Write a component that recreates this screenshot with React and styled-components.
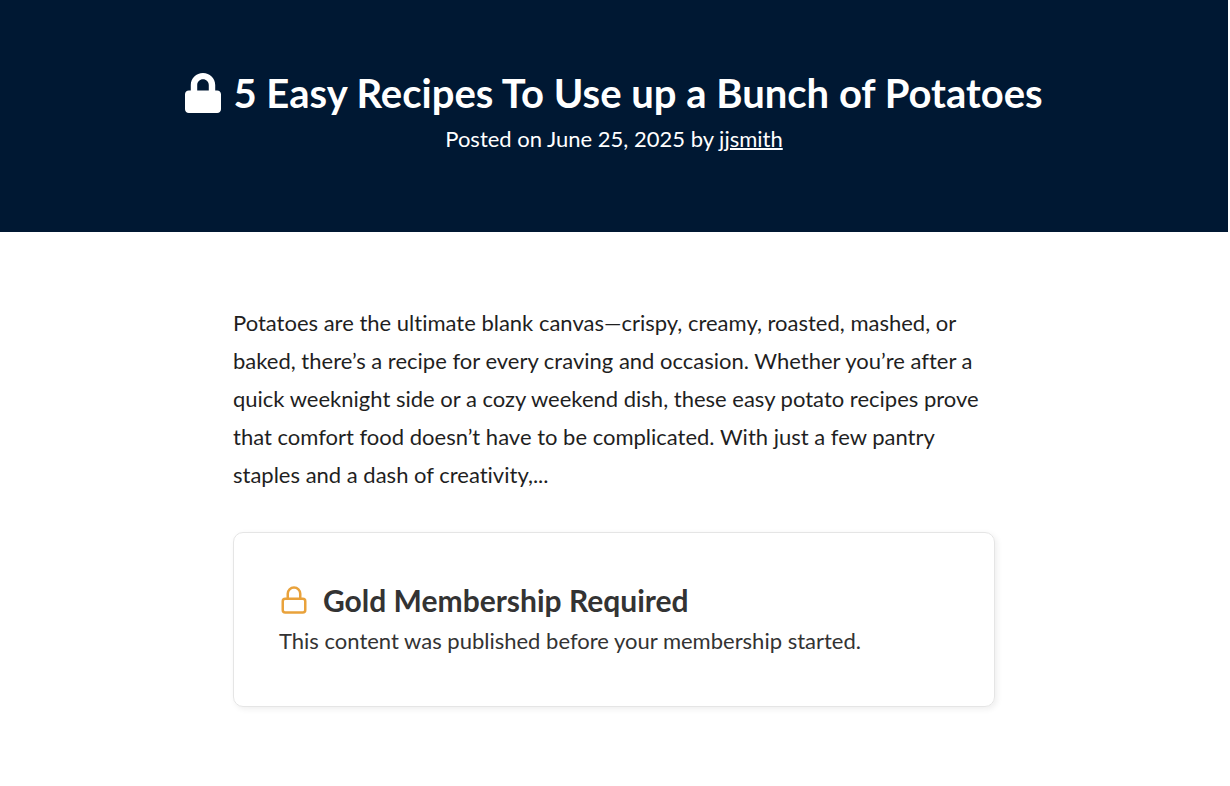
import React from "react";
import styled, { createGlobalStyle } from "styled-components";

const GlobalStyle = createGlobalStyle`
  *, *::before, *::after { box-sizing: border-box; }
  body {
    margin: 0;
    background: #fff;
    color: #1f1f1f;
    font-family: Lato, "Open Sans", sans-serif;
    font-size: 22px;
    font-variant-ligatures: none;
    line-height: 38px;
  }
`;

const Page = styled.div`
  padding-right: 2px;
`;

const Banner = styled.header`
  padding: 66px 24px 74px;
  background: #001833;
  color: #fff;
  text-align: center;
`;

const Title = styled.h1`
  display: flex;
  align-items: center;
  justify-content: center;
  gap: 12px;
  margin: 0;
  font-size: 40px;
  font-weight: 700;
  line-height: 54px;
`;

const SolidLock = styled.svg`
  flex: none;
  width: 36px;
  height: 40px;
  fill: currentColor;
`;

const Byline = styled.p`
  margin: 0;
`;

const AuthorLink = styled.a`
  color: inherit;
  text-decoration: underline 2px;
`;

const Content = styled.main`
  max-width: 762px;
  margin: 0 auto;
  padding: 72px 0;
`;

const Excerpt = styled.p`
  margin: 0 0 38px;
`;

const Notice = styled.section`
  padding: 45px 45px 46px;
  border: 1px solid #e5e5e5;
  border-radius: 10px;
  box-shadow: 2px 2px 6px rgba(0, 0, 0, 0.07);
  color: #333;
`;

const NoticeTitle = styled.h2`
  display: flex;
  align-items: center;
  gap: 14px;
  margin: 0;
  font-size: 30px;
  font-weight: 700;
  line-height: 44px;
`;

const OutlineLock = styled.svg`
  flex: none;
  width: 30px;
  height: 30px;
  fill: none;
  stroke: #e9a23b;
  stroke-width: 2;
  stroke-linecap: round;
  stroke-linejoin: round;
`;

const NoticeText = styled.p`
  margin: 0;
`;

export default function App() {
  return (
    <Page>
      <GlobalStyle />
      <Banner>
        <Title>
          <SolidLock viewBox="0 0 448 512" preserveAspectRatio="none" aria-hidden="true">
            <path d="M400 224h-24v-72C376 68.200 307.800 0 224 0S72 68.200 72 152v72H48c-26.500 0-48 21.500-48 48v192c0 26.500 21.500 48 48 48h352c26.500 0 48-21.500 48-48V272c0-26.500-21.500-48-48-48zm-104 0H152v-72c0-39.700 32.300-72 72-72s72 32.300 72 72v72z" />
          </SolidLock>
          5 Easy Recipes To Use up a Bunch of Potatoes
        </Title>
        <Byline>
          Posted on June 25, 2025 by <AuthorLink href="#jjsmith">jjsmith</AuthorLink>
        </Byline>
      </Banner>
      <Content>
        <Excerpt>
          Potatoes are the ultimate blank canvas—crispy, creamy, roasted, mashed, or
          baked, there’s a recipe for every craving and occasion. Whether you’re after a
          quick weeknight side or a cozy weekend dish, these easy potato recipes prove
          that comfort food doesn’t have to be complicated. With just a few pantry
          staples and a dash of creativity,...
        </Excerpt>
        <Notice>
          <NoticeTitle>
            <OutlineLock viewBox="0 0 24 24" aria-hidden="true">
              <rect x="3" y="11" width="18" height="11" rx="2" />
              <path d="M7 11V7a5 5 0 0 1 10 0v4" />
            </OutlineLock>
            Gold Membership Required
          </NoticeTitle>
          <NoticeText>This content was published before your membership started.</NoticeText>
        </Notice>
      </Content>
    </Page>
  );
}
